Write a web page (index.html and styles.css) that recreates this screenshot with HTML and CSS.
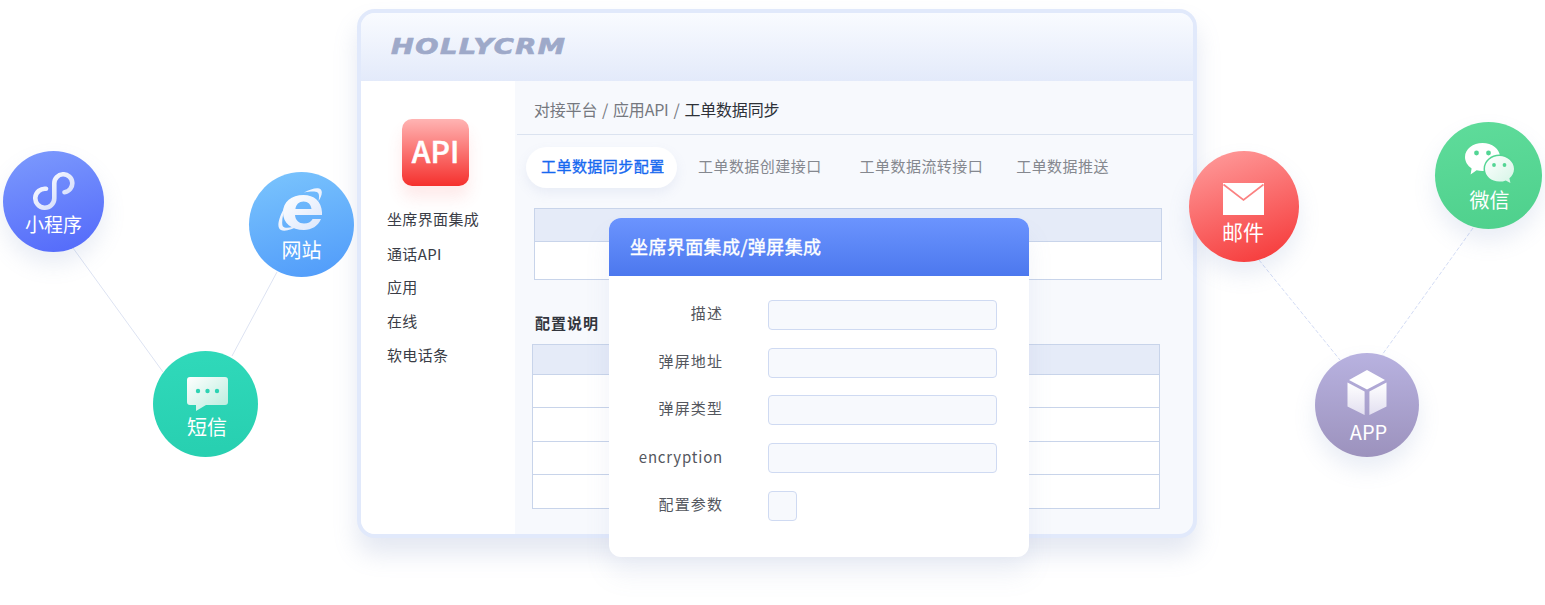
FILE: index.html
```html
<!DOCTYPE html>
<html lang="zh-CN">
<head>
<meta charset="utf-8">
<title>HOLLYCRM</title>
<link rel="stylesheet" href="styles.css">
</head>
<body>
<div class="stage">
  <svg class="links" width="1545" height="605" viewBox="0 0 1545 605">
    <line class="link" x1="73" y1="248" x2="163" y2="372"/>
    <line class="link" x1="277" y1="272" x2="232" y2="356"/>
    <line class="link link-dash" x1="1259" y1="260" x2="1340" y2="360"/>
    <line class="link link-dash" x1="1473" y1="228" x2="1382" y2="355"/>
  </svg>

  <section class="window">
    <header class="win-head"><span class="logo">HOLLYCRM</span></header>
    <div class="win-body">
      <aside class="side">
        <div class="api-tile">API</div>
        <ul class="side-list">
          <li>坐席界面集成</li>
          <li>通话API</li>
          <li>应用</li>
          <li>在线</li>
          <li>软电话条</li>
        </ul>
      </aside>
      <main class="main">
        <div class="crumb">对接平台 / 应用API / <span class="crumb-now">工单数据同步</span></div>
        <nav class="tabs">
          <span class="tab tab-on">工单数据同步配置</span>
          <span class="tab">工单数据创建接口</span>
          <span class="tab">工单数据流转接口</span>
          <span class="tab">工单数据推送</span>
        </nav>
        <div class="table table-a">
          <div class="t-head t-head-a"></div>
          <div class="t-row t-row-a"></div>
        </div>
        <h3 class="sec-title">配置说明</h3>
        <div class="table table-b">
          <div class="t-head t-head-b"></div>
          <div class="t-row"></div>
          <div class="t-row"></div>
          <div class="t-row"></div>
          <div class="t-row"></div>
        </div>
      </main>
    </div>
    <div class="modal">
      <div class="modal-head">坐席界面集成/弹屏集成</div>
      <div class="modal-body">
        <div class="field"><label class="f-label">描述</label><div class="f-input"></div></div>
        <div class="field"><label class="f-label">弹屏地址</label><div class="f-input"></div></div>
        <div class="field"><label class="f-label">弹屏类型</label><div class="f-input"></div></div>
        <div class="field"><label class="f-label f-label-en">encryption</label><div class="f-input"></div></div>
        <div class="field"><label class="f-label">配置参数</label><div class="f-input f-check"></div></div>
      </div>
    </div>
  </section>

  <div class="badge b-mini">
    <svg class="ico" width="42" height="40" viewBox="0 0 42 40">
      <defs><linearGradient id="gm" x1="0" y1="0" x2="1" y2="1"><stop offset="0" stop-color="#fff"/><stop offset="1" stop-color="#ccd6fb"/></linearGradient></defs>
      <path d="M13 16.8A9.5 9.5 0 1 0 21.3 26.2V11.3A9 9 0 1 1 31.5 20.2" fill="none" stroke="url(#gm)" stroke-width="4.6" stroke-linecap="round"/>
    </svg>
    <span class="b-label">小程序</span>
  </div>

  <div class="badge b-web">
    <svg class="ico" width="44" height="44" viewBox="0 0 44 44">
      <defs><linearGradient id="ge" x1="0" y1="0" x2="1" y2="1"><stop offset="0" stop-color="#fff"/><stop offset="1" stop-color="#dbe6fb"/></linearGradient></defs>
      <path fill="url(#ge)" fill-rule="evenodd" d="M44 27H17C17.5 32.5 21 35.5 26 35.5C30 35.5 33 34 34.6 31H43C40 38 33.6 42 26 42C13.5 42 5 35 5 24.5C5 14 13.5 7 25.5 7C37 7 44.6 14.5 44 27ZM17.4 21H33.5C33 16.4 30 13.4 25.6 13.4C21 13.4 18 16.4 17.4 21Z"/>
      <path fill="url(#ge)" d="M26 4.5C33 .5 40 -1 42.6 1.2C45 3.4 43.6 8.5 40.6 13C41.2 8.8 41.4 5.6 39.6 4.4C37.4 3 32 3.2 26 4.5ZM7.5 18C2 27 -1 36 1 40C3 44.5 12 43 21 37.5C14 39.5 7 41 5 38.5C3.2 36 4.5 27 7.5 18Z"/>
    </svg>
    <span class="b-label">网站</span>
  </div>

  <div class="badge b-sms">
    <svg class="ico" width="41" height="34" viewBox="0 0 41 34">
      <defs><linearGradient id="gs" x1="0" y1="0" x2="1" y2="1"><stop offset="0" stop-color="#fff"/><stop offset="1" stop-color="#b7ecdc"/></linearGradient></defs>
      <path fill="url(#gs)" d="M3 0H38A3 3 0 0 1 41 3V25A3 3 0 0 1 38 28H19L9 34V28H3A3 3 0 0 1 0 25V3A3 3 0 0 1 3 0Z"/>
      <circle cx="11" cy="14" r="2.2" fill="#2cd3b3"/><circle cx="20.5" cy="14" r="2.2" fill="#2cd3b3"/><circle cx="30" cy="14" r="2.2" fill="#2cd3b3"/>
    </svg>
    <span class="b-label">短信</span>
  </div>

  <div class="badge b-mail">
    <svg class="ico" width="41" height="32" viewBox="0 0 41 32">
      <rect width="41" height="32" fill="#fff"/>
      <path d="M.5 1.5L20.5 17L40.5 1.5" fill="none" stroke="#fb8181" stroke-width="1.6"/>
    </svg>
    <span class="b-label">邮件</span>
  </div>

  <div class="badge b-wx">
    <svg class="ico" width="49" height="40" viewBox="0 0 49 40">
      <defs><linearGradient id="gw" x1="0" y1="0" x2="1" y2="1"><stop offset="0" stop-color="#fff"/><stop offset="1" stop-color="#d5f5e6"/></linearGradient></defs>
      <path fill="#fff" d="M17.5 0C27 0 35 6 35 14C35 22 27 28 17.5 28C15.4 28 13.4 27.7 11.6 27.2L5.6 31.6L6.6 25.4C2.6 22.8 0 18.6 0 14C0 6 8 0 17.5 0Z"/>
      <circle cx="11.5" cy="10" r="2.4" fill="#53d594"/><circle cx="23.5" cy="10" r="2.4" fill="#53d594"/>
      <ellipse cx="34.5" cy="26" rx="16" ry="14.4" fill="#55d594"/>
      <path fill="url(#gw)" d="M34.5 13C42 13 49 18.6 49 26C49 30 47 33 44.4 35.2L45.4 40L40.8 37.4C38.8 38.2 36.8 38.6 34.5 38.6C26.4 38.6 20 33 20 26C20 18.6 26.4 13 34.5 13Z"/>
      <circle cx="29" cy="22" r="1.9" fill="#53d594"/><circle cx="39.5" cy="22" r="1.9" fill="#53d594"/>
    </svg>
    <span class="b-label">微信</span>
  </div>

  <div class="badge b-app">
    <svg class="ico" width="40" height="45" viewBox="0 0 40 45">
      <defs><linearGradient id="ga" x1="0" y1="0" x2="0" y2="1"><stop offset="0" stop-color="#fff"/><stop offset="1" stop-color="#e2dff0"/></linearGradient></defs>
      <path fill="#fff" d="M20 0L38 10L20 19.5L2 10Z"/>
      <path fill="url(#ga)" d="M.5 12.6L17.6 21.6V45L.5 36.6Z"/>
      <path fill="url(#ga)" d="M39.5 12.6L22.4 21.6V45L39.5 36.6Z"/>
    </svg>
    <span class="b-label">APP</span>
  </div>
</div>
</body>
</html>
```
FILE: styles.css
```css
* { box-sizing: border-box; }
html, body { margin: 0; padding: 0; background: #fff; }
body { font-family: "Noto Sans CJK SC", "Noto Sans", sans-serif; }
.stage { position: relative; width: 1545px; height: 605px; overflow: hidden; padding: 9px 0 0 357px; }

.links { position: absolute; left: 0; top: 0; }
.link { stroke: #dde3f2; stroke-width: 1; }
.link-dash { stroke: #d3dcf5; stroke-dasharray: 4 2; }

/* window */
.window {
  position: relative; width: 840px; height: 529px;
  border: 4px solid #e1e9fb; border-radius: 18px;
  background: #f7f9fd;
  box-shadow: 0 16px 24px rgba(120, 140, 190, .2);
}
.win-head {
  height: 68px; padding: 0 30px; display: flex; align-items: center;
  border-radius: 14px 14px 0 0;
  background: linear-gradient(180deg, #f9fbff 0%, #e3eafa 100%);
}
.logo {
  display: inline-block; transform: scaleX(1.24); transform-origin: left center;
  font-family: "DejaVu Sans", sans-serif; font-weight: 700; font-style: italic;
  font-size: 22px; line-height: 26px; letter-spacing: 1.2px; color: #9ea9c9;
  -webkit-text-stroke: .7px #9ea9c9;
}
.win-body { display: flex; height: 453px; }
.side { width: 154px; background: #fff; border-radius: 0 0 0 14px; padding: 38px 0 0 26px; }
.api-tile {
  width: 67px; height: 67px; margin-left: 15px; padding-bottom: 5px; border-radius: 10px;
  display: flex; align-items: center; justify-content: center;
  background: linear-gradient(180deg, #ffb4b3 0%, #f5302d 100%);
  box-shadow: 0 12px 16px rgba(245, 80, 80, .12);
  color: #fff; font-size: 30px; font-weight: 500; line-height: 1;
  -webkit-text-stroke: .5px #fff;
}
.side-list { list-style: none; margin: 16px 0 0; padding: 0; color: #3a3d46; font-size: 15px; letter-spacing: .35px; }
.side-list li { height: 34px; line-height: 34px; }
.side-list li:first-child { height: 35px; }
.side-list li:nth-child(2) { height: 33px; }

.main { flex: 1; min-width: 0; border-radius: 0 0 14px 0; }
.crumb {
  margin-left: 2px; height: 54px; padding: 2px 0 0 17px; display: flex; align-items: center; white-space: pre;
  border-bottom: 1px solid #dbe3f0;
  font-size: 16px; letter-spacing: -.2px; word-spacing: 1.5px; color: #75787f;
}
.crumb-now { color: #2e3138; }
.tabs { display: flex; margin: 12px 0 0 11px; height: 41px; }
.tab { padding: 0 0 5px 16px; margin-right: 21px; display: flex; align-items: center; font-size: 15px; letter-spacing: .45px; color: #85888f; white-space: nowrap; }
.tab:nth-child(3) { margin-right: 17px; }
.tab-on {
  width: 151px; padding-left: 15px; margin-right: 5px; background: #fff; border-radius: 21px; color: #1668f0;
  -webkit-text-stroke: .35px #1668f0;
  box-shadow: 0 5px 12px rgba(130, 150, 200, .12);
}
.tab:nth-child(2) { margin-right: 22px; }
.table { background: #fff; border: 1px solid #c8d4ea; }
.table-a { width: 628px; height: 72px; margin: 20px 0 0 19px; }
.t-head { background: #e5ebf8; border-bottom: 1px solid #c8d4ea; }
.t-head-a { height: 33px; }
.t-head-b { height: 30px; }
.t-row { height: 33.4px; border-bottom: 1px solid #c8d4ea; }
.t-row:last-child { border-bottom: 0; }
.t-row-a { height: 37px; }
.sec-title { margin: 31px 0 0 20px; height: 24px; line-height: 24px; font-size: 15px; letter-spacing: 1px; font-weight: 700; color: #33363d; }
.table-b { width: 628px; height: 165px; margin: 9px 0 0 17px; }

/* modal */
.modal {
  position: absolute; left: 248px; top: 205px; width: 420px; height: 339px;
  background: #fff; border-radius: 12px;
  box-shadow: 0 18px 26px rgba(120, 140, 190, .1);
}
.modal-head {
  height: 58px; padding: 0 21px 2px; display: flex; align-items: center;
  border-radius: 12px 12px 0 0; background: linear-gradient(180deg, #6b94fe 0%, #4c78ee 100%);
  color: #fff; font-size: 18px; letter-spacing: .4px;
  -webkit-text-stroke: .4px #fff;
}
.modal-body { padding: 24px 32px 0 0; display: flex; flex-direction: column; gap: 17.7px; }
.field { display: flex; height: 30px; }
.f-label { width: 114px; margin-right: 45px; line-height: 25px; text-align: right; font-size: 15px; letter-spacing: 1.1px; color: #54575e; white-space: nowrap; }
.f-label-en { letter-spacing: .8px; line-height: 27px; }
.f-input { flex: 1; border: 1px solid #cfdaf2; border-radius: 4px; background: #f7f9fd; }
.f-check { flex: none; width: 29px; }

/* circular channels */
.badge {
  position: absolute; border-radius: 50%; display: flex; flex-direction: column; align-items: center;
  color: #fff; box-shadow: 0 12px 22px rgba(120, 140, 190, .16);
}
.ico { display: block; flex: none; }
.b-label { font-size: 20px; line-height: 26px; white-space: nowrap; }
.b-mini { left: 3px; top: 151px; width: 101px; height: 101px; padding-top: 21px; background: linear-gradient(165deg, #7d9bfd 0%, #5268fa 100%); }
.b-web { left: 249px; top: 172px; width: 105px; height: 105px; padding: 16px 3px 0 0; background: linear-gradient(165deg, #7bc5fd 0%, #4f9afa 100%); box-shadow: none; }
.b-sms { left: 153px; top: 351px; width: 105px; height: 106px; padding: 26px 0 0 4px; background: linear-gradient(175deg, #30d9ba 0%, #27cfb0 100%); box-shadow: none; }
.b-mail { left: 1189px; top: 151px; width: 110px; height: 111px; padding: 32px 2px 0 0; background: linear-gradient(160deg, #ff9f9f 0%, #f53434 100%); }
.b-wx { left: 1435px; top: 122px; width: 107px; height: 107px; padding: 21px 0 0 2px; background: linear-gradient(170deg, #5fdc9b 0%, #4ed08c 100%); }
.b-app { left: 1315px; top: 353px; width: 104px; height: 104px; padding-top: 17px; background: linear-gradient(180deg, #b8b2e0 0%, #9c92bd 100%); }
.b-mini .b-label { font-size: 19px; margin-top: -1px; }
.b-web .b-label { margin: 5px 0 0 3px; }
.b-sms .b-label { margin: 3px 0 0 -1px; }
.b-mail .b-label { font-size: 21px; margin-top: 3px; }
.b-wx .b-label { margin-top: 4px; }
.b-app .b-label { margin: 4px 0 0 3px; }
```
